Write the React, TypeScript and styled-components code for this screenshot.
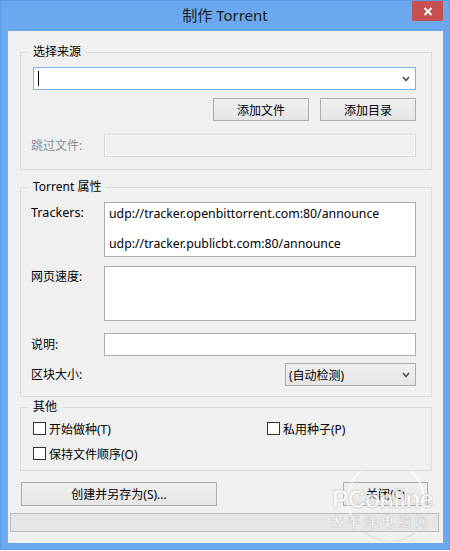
import React from "react";
import styled, { createGlobalStyle } from "styled-components";

const FONT = `"Noto Sans", "Noto Sans CJK SC", sans-serif`;

const Global = createGlobalStyle`
  html, body { margin: 0; padding: 0; background: #ffffff; }
  body { font-family: ${FONT}; font-size: 12px; color: #000; }
  * { box-sizing: border-box; }
`;

const Window = styled.div`
  width: 450px;
  height: 550px;
  background: #6aa9ef;
  border: 1px solid #5b9be3;
  display: flex;
  flex-direction: column;
`;

const TitleBar = styled.div`
  height: 30px;
  display: grid;
  grid-template-columns: 1fr auto 1fr;
  align-items: start;
`;

const Title = styled.div`
  grid-column: 2;
  font-family: ${FONT};
  font-size: 15px;
  line-height: 29px;
  color: #1b1b1b;
  white-space: nowrap;
`;

const CloseBox = styled.div`
  grid-column: 3;
  justify-self: end;
  width: 31px;
  height: 20px;
  margin-right: 6px;
  background: #c75050;
  display: flex;
  align-items: center;
  justify-content: center;
`;

const Client = styled.div`
  position: relative;
  margin: 0 6px 0 7px;
  height: 512px;
  background: #f0f0f0;
  padding-top: 13px;
  display: flex;
  flex-direction: column;
`;

const Group = styled.fieldset<{ $mt: number }>`
  margin: ${(p) => p.$mt}px 11px 0 12px;
  padding: 0;
  border: 1px solid #dcdcdc;
  min-width: 0;
`;

const Legend = styled.legend`
  margin-left: 7px;
  padding: 0 5px;
  font-size: 12px;
  line-height: 16px;
  color: #000;
`;

const GroupBody = styled.div<{ $pl: number; $pb: number }>`
  padding: 7px 15px ${(p) => p.$pb}px ${(p) => p.$pl}px;
  display: flex;
  flex-direction: column;
`;

const Combo = styled.div`
  margin-left: 2px;
  height: 23px;
  background: #fff;
  border: 1px solid #7eb4ea;
  display: flex;
  align-items: center;
  padding: 0 5px 0 4px;
`;

const Caret = styled.div`
  width: 1px;
  height: 15px;
  background: #000;
`;

const Spacer = styled.div`
  flex: 1;
`;

const ButtonRow = styled.div`
  display: flex;
  justify-content: flex-end;
  gap: 11px;
  margin-top: 8px;
`;

const Button = styled.div<{ $w: number; $h?: number }>`
  width: ${(p) => p.$w}px;
  height: ${(p) => p.$h ?? 23}px;
  border: 1px solid #acacac;
  background: linear-gradient(#f0f0f0, #e5e5e5);
  display: flex;
  align-items: center;
  justify-content: center;
  font-size: 12px;
  color: #000;
  white-space: nowrap;
`;

const FormGrid = styled.div<{ $mt?: number }>`
  display: grid;
  grid-template-columns: 73px 1fr;
  align-items: center;
  margin-top: ${(p) => p.$mt ?? 0}px;
`;

const Label = styled.div<{ $disabled?: boolean; $top?: boolean; $latin?: boolean }>`
  font-size: ${(p) => (p.$latin ? 12.6 : 12)}px;
  line-height: 16px;
  color: ${(p) => (p.$disabled ? "#8d8d8d" : "#000")};
  align-self: ${(p) => (p.$top ? "start" : "center")};
  padding-top: ${(p) => (p.$top ? 3 : 0)}px;
  white-space: nowrap;
`;

const TextInput = styled.div<{ $disabled?: boolean }>`
  height: 23px;
  border: 1px solid ${(p) => (p.$disabled ? "#d9d9d9" : "#abadb3")};
  background: ${(p) => (p.$disabled ? "#f0f0f0" : "#fff")};
  box-shadow: ${(p) => (p.$disabled ? "inset 0 0 0 1px #fbfbfb" : "none")};
`;

const TextArea = styled.textarea`
  display: block;
  width: 100%;
  height: 55px;
  margin: 0;
  border: 1px solid #abadb3;
  background: #fff;
  padding: 3px 4px;
  font-family: ${FONT};
  font-size: 12.3px;
  line-height: 15px;
  color: #000;
  resize: none;
  overflow: hidden;
  outline: none;
  white-space: pre;
`;

const Select = styled.div`
  justify-self: end;
  width: 131px;
  height: 23px;
  border: 1px solid #acacac;
  background: linear-gradient(#f0f0f0, #e5e5e5);
  display: flex;
  align-items: center;
  padding: 0 5px 0 3px;
  font-size: 12px;
`;

const CheckGrid = styled.div`
  display: grid;
  grid-template-columns: 234px 1fr;
  row-gap: 12px;
`;

const CheckItem = styled.div`
  display: flex;
  align-items: center;
  height: 13px;
  gap: 3px;
  font-size: 12px;
  white-space: nowrap;
`;

const CheckBox = styled.div`
  width: 13px;
  height: 13px;
  border: 1px solid #333;
  background: #fff;
  flex: none;
`;

const BottomRow = styled.div`
  display: flex;
  justify-content: space-between;
  margin: 11px 15px 0 13px;
`;

const Progress = styled.div`
  margin: 7px 4px 0 2px;
  height: 19px;
  border: 1px solid #bcbcbc;
  background: #e6e6e6;
`;

const Watermark = styled.div`
  position: absolute;
  left: 318px;
  top: 440px;
  width: 118px;
  height: 70px;
  pointer-events: none;
`;

const WmLogo = styled.div`
  position: absolute;
  left: 6px;
  top: 14px;
  font-family: "Liberation Sans", sans-serif;
  font-weight: bold;
  font-size: 25px;
  letter-spacing: -1px;
  color: rgba(255, 255, 255, 0.8);
  -webkit-text-stroke: 1px rgba(180, 180, 180, 0.45);
`;

const WmDots = styled.div`
  position: absolute;
  left: 86px;
  top: 25px;
  font-family: "Liberation Sans", sans-serif;
  font-size: 9px;
  color: rgba(190, 190, 190, 0.6);
`;

const WmSub = styled.div`
  position: absolute;
  left: 4px;
  top: 40px;
  font-family: "Noto Sans CJK SC", sans-serif;
  font-weight: bold;
  font-size: 13px;
  letter-spacing: 4px;
  color: rgba(255, 255, 255, 0.75);
  -webkit-text-stroke: 0.8px rgba(180, 180, 180, 0.45);
  white-space: nowrap;
`;

const WmRing = styled.svg`
  position: absolute;
  left: 18px;
  top: 0px;
`;

const Chevron = () => (
  <svg width="8" height="6" viewBox="0 0 8 6">
    <path d="M1 1 L4 4.5 L7 1" fill="none" stroke="#505050" strokeWidth="1.6" />
  </svg>
);

export default function App() {
  return (
    <>
      <Global />
      <Window>
        <TitleBar>
          <Title>制作 Torrent</Title>
          <CloseBox>
            <svg width="10" height="9" viewBox="0 0 10 9">
              <path d="M1.5 1 L8.5 8 M8.5 1 L1.5 8" stroke="#fff" strokeWidth="2" />
            </svg>
          </CloseBox>
        </TitleBar>
        <Client>
          <Group $mt={0}>
            <Legend>选择来源</Legend>
            <GroupBody $pl={10} $pb={12}>
              <Combo>
                <Caret />
                <Spacer />
                <Chevron />
              </Combo>
              <ButtonRow>
                <Button $w={96}>添加文件</Button>
                <Button $w={96}>添加目录</Button>
              </ButtonRow>
              <FormGrid $mt={13}>
                <Label $disabled>跳过文件:</Label>
                <TextInput $disabled />
              </FormGrid>
            </GroupBody>
          </Group>

          <Group $mt={9}>
            <Legend>Torrent 属性</Legend>
            <GroupBody $pl={10} $pb={10}>
              <FormGrid>
                <Label $top $latin>Trackers:</Label>
                <TextArea
                  readOnly
                  value={"udp://tracker.openbittorrent.com:80/announce\n\nudp://tracker.publicbt.com:80/announce"}
                />
              </FormGrid>
              <FormGrid $mt={9}>
                <Label $top>网页速度:</Label>
                <TextArea readOnly value="" />
              </FormGrid>
              <FormGrid $mt={12}>
                <Label>说明:</Label>
                <TextInput />
              </FormGrid>
              <FormGrid $mt={7}>
                <Label>区块大小:</Label>
                <Select>
                  <span>(自动检测)</span>
                  <Spacer />
                  <Chevron />
                </Select>
              </FormGrid>
            </GroupBody>
          </Group>

          <Group $mt={2}>
            <Legend>其他</Legend>
            <GroupBody $pl={12} $pb={10}>
              <CheckGrid>
                <CheckItem>
                  <CheckBox />
                  开始做种(T)
                </CheckItem>
                <CheckItem>
                  <CheckBox />
                  私用种子(P)
                </CheckItem>
                <CheckItem>
                  <CheckBox />
                  保持文件顺序(O)
                </CheckItem>
              </CheckGrid>
            </GroupBody>
          </Group>

          <BottomRow>
            <Button $w={196} $h={24}>创建并另存为(S)...</Button>
            <Button $w={85} $h={24}>关闭(C)</Button>
          </BottomRow>
          <Progress />

          <Watermark>
            <WmRing width="90" height="70" viewBox="0 0 90 70">
              <path
                d="M12 52 A38 38 0 1 1 78 40"
                fill="none"
                stroke="rgba(255,255,255,0.7)"
                strokeWidth="2"
              />
              <path
                d="M20 60 A38 38 0 0 0 70 62"
                fill="none"
                stroke="rgba(200,200,200,0.45)"
                strokeWidth="1.5"
              />
            </WmRing>
            <WmLogo>PConline</WmLogo>
            <WmDots>.........</WmDots>
            <WmSub>太平洋电脑网</WmSub>
          </Watermark>
        </Client>
      </Window>
    </>
  );
}
